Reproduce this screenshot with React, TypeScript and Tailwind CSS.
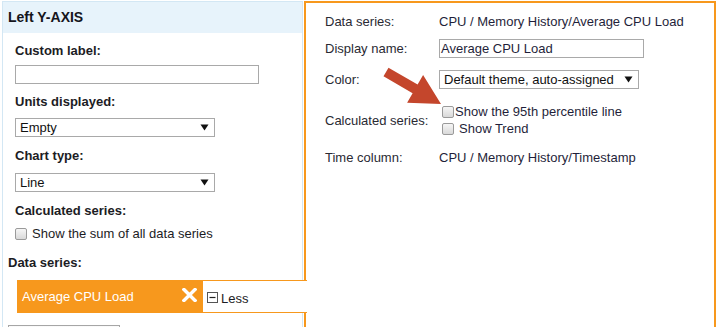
import type { ReactNode } from "react";

const font = { fontFamily: "'Liberation Sans', Arial, Helvetica, sans-serif" };

function Checkbox() {
  return (
    <span className="inline-block h-[12px] w-[12px] shrink-0 rounded-[2px] border border-[#9a9a9a] bg-gradient-to-b from-[#f6f6f6] to-[#d9d9d9]" />
  );
}

function Arrow() {
  return (
    <svg width="9" height="7" viewBox="0 0 9 7" className="shrink-0">
      <path d="M0.5 0.5 L8.5 0.5 L4.5 6.5 Z" fill="#111" />
    </svg>
  );
}

function Select({ value, width }: { value: string; width: string }) {
  return (
    <div className={`flex h-[19px] items-center justify-between border border-[#a9a9a9] bg-white pl-[4px] pr-[5px] text-[13px] text-[#111] ${width}`}>
      <span>{value}</span>
      <Arrow />
    </div>
  );
}

function Label({ children, className = "" }: { children: ReactNode; className?: string }) {
  return <div className={`text-[13px] font-bold leading-[15px] text-[#1c1c24] ${className}`}>{children}</div>;
}

function Row({ label, children, className = "" }: { label: string; children: ReactNode; className?: string }) {
  return (
    <div className={`flex items-center ${className}`}>
      <div className="w-[114px] shrink-0 text-[13px] leading-[15px] text-[#2a2a33]">{label}</div>
      {children}
    </div>
  );
}

export default function App() {
  return (
    <div className="relative min-h-screen bg-white pl-[2px] pt-[1px]" style={font}>
      <div className="flex">
        {/* left axis panel */}
        <div className="w-[301px] border border-[#d3e7f4] bg-white">
          <div className="flex h-[31px] items-center bg-[#e7f3fb] pl-[5px] text-[14px] font-bold text-[#15151c]">Left Y-AXIS</div>
          <div className="pl-[12px]">
            <Label className="mt-[10px]">Custom label:</Label>
            <div className="mt-[7px] h-[19px] w-[244px] border border-[#a9a9a9] bg-white" />
            <Label className="mt-[10px]">Units displayed:</Label>
            <div className="mt-[9px]">
              <Select value="Empty" width="w-[200px]" />
            </div>
            <Label className="mt-[11px]">Chart type:</Label>
            <div className="mt-[10px]">
              <Select value="Line" width="w-[200px]" />
            </div>
            <Label className="mt-[11px]">Calculated series:</Label>
            <div className="mt-[8px] flex h-[15px] items-center gap-[5px] text-[13px] text-[#1c1c24]">
              <Checkbox />
              <span>Show the sum of all data series</span>
            </div>
          </div>
          <Label className="ml-[5px] mt-[14px]">Data series:</Label>
          <div className="relative z-10 -mr-[5px] ml-[14px] mt-[10px] flex h-[33px]">
            <div className="flex w-[186px] items-center justify-between bg-[#f7981d] pl-[5px] pr-[6px] text-[13px] text-white">
              <span>Average CPU Load</span>
              <svg width="15" height="14" viewBox="0 0 15 14" className="-mt-[4px]">
                <path d="M2 1.5 L13 12.5 M13 1.5 L2 12.5" stroke="#fff" strokeWidth="3.4" strokeLinecap="square" />
              </svg>
            </div>
            <div className="flex flex-1 items-end gap-[3px] border-y border-[#f7981d] bg-white pb-[6px] pl-[4px] text-[13px] leading-[15px] text-[#1c1c24]">
              <svg width="11" height="11" viewBox="0 0 11 11" className="mb-[3px]">
                <rect x="0.5" y="0.5" width="10" height="10" fill="#fff" stroke="#555" />
                <path d="M2.5 5.5 H8.5" stroke="#222" strokeWidth="1.2" />
              </svg>
              <span>Less</span>
            </div>
          </div>
          <div className="ml-[5px] mt-[12px] h-[22px] w-[112px] border border-[#a6a6a6] bg-gradient-to-b from-[#fafafa] to-[#e4e4e4]" />
          <div className="h-[6px]" />
        </div>

        {/* series details panel */}
        <div className="ml-[1px] w-[412px] border-2 border-b-0 border-[#f7981d] bg-white pl-[19px] pt-[11px]">
          <Row label="Data series:">
            <span className="text-[13px] leading-[15px] text-[#1f1f3a]">CPU / Memory History/Average CPU Load</span>
          </Row>
          <Row label="Display name:" className="mt-[10px]">
            <div className="flex h-[19px] w-[205px] items-center border border-[#a9a9a9] pl-[1px] text-[13px] text-[#1f1f3a]">Average CPU Load</div>
          </Row>
          <Row label="Color:" className="mt-[12px]">
            <Select value="Default theme, auto-assigned" width="w-[200px]" />
          </Row>
          <Row label="Calculated series:" className="mt-[14px]">
            <div className="flex flex-col pl-[3px] text-[13px] text-[#1f1f3a]">
              <div className="flex h-[17px] items-center">
                <Checkbox />
                <span className="ml-[1px]">Show the 95th percentile line</span>
              </div>
              <div className="flex h-[17px] items-center">
                <Checkbox />
                <span className="ml-[5px]">Show Trend</span>
              </div>
            </div>
          </Row>
          <Row label="Time column:" className="mt-[13px]">
            <span className="text-[13px] leading-[15px] text-[#1f1f3a]">CPU / Memory History/Timestamp</span>
          </Row>
        </div>
      </div>

      {/* annotation arrow */}
      <svg className="pointer-events-none absolute left-0 top-0" width="717" height="327">
        <polygon
          points="388.5,67.7 417.6,84.6 423.1,75.1 441,104 407.1,102.7 412.6,93.2 383.5,76.3"
          fill="#c4462c"
        />
      </svg>
    </div>
  );
}
